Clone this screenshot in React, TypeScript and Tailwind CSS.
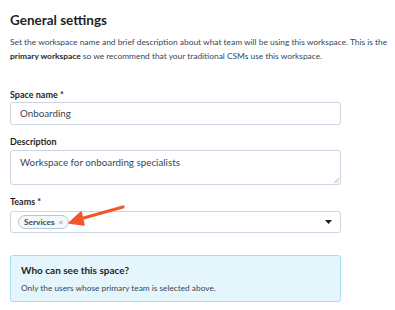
import React from "react";

export default function App() {
  return (
    <div className="relative w-[395px] h-[310px] bg-white text-[#213343] font-['Lato','Open_Sans',sans-serif]">
      <div className="pl-[10px] pt-[11px] w-[341px]">
        <h1 className="text-[13.5px] font-bold leading-[18px] text-[#1f1f1f]">General settings</h1>
        <p className="mt-[6px] w-[384px] text-[8.4px] leading-[14px] text-[#33475b] whitespace-nowrap">
          Set the workspace name and brief description about what team will be using this workspace. This is the
          <br />
          <span className="font-bold text-[#1f1f1f]">primary workspace</span> so we recommend that your traditional CSMs use this workspace.
        </p>

        <div className="mt-[26px] text-[9px] font-bold leading-[12px] text-[#1f1f1f]">Space name *</div>
        <div className="mt-[1px] h-[23px] w-[331px] rounded-[3px] border border-[#cbd6e2] flex items-center pl-[9px] text-[9.8px] text-[#33475b]">
          Onboarding
        </div>

        <div className="mt-[11px] text-[9px] font-bold leading-[12px] text-[#1f1f1f]">Description</div>
        <div className="relative mt-[2px] h-[35px] w-[331px] rounded-[3px] border border-[#cbd6e2] pl-[9px] pt-[4px] text-[9.8px] leading-[14px] text-[#33475b]">
          Workspace for onboarding specialists
          <svg className="absolute right-[1px] bottom-[1px]" width="6" height="6" viewBox="0 0 6 6">
            <path d="M1 6 L6 1 M3.5 6 L6 3.5" stroke="#a0a0a0" strokeWidth="0.8" />
          </svg>
        </div>

        <div className="mt-[11px] text-[9px] font-bold leading-[12px] text-[#1f1f1f]">Teams *</div>
        <div className="mt-[3px] h-[22px] w-[331px] rounded-[3px] border border-[#cbd6e2] flex items-center justify-between pl-[7px] pr-[8px]">
          <div className="h-[14px] rounded-full border border-[#b9c5d2] bg-[#f5f8fa] flex items-center px-[5px] gap-[4px]">
            <span className="text-[8.3px] font-bold text-[#33475b] leading-none">Services</span>
            <span className="text-[8px] text-[#7c98b6] leading-none">×</span>
          </div>
          <svg width="7" height="4" viewBox="0 0 7 4">
            <path d="M0 0 H7 L3.5 4 Z" fill="#1f1f1f" />
          </svg>
        </div>

        <div className="mt-[22px] h-[47px] w-[331px] rounded-[3px] border border-[#a9dcf2] bg-[#e5f5fc] pl-[10px] pt-[8px]">
          <div className="text-[10px] font-bold leading-[13px] text-[#1f1f1f]">Who can see this space?</div>
          <div className="mt-[5px] text-[8.3px] leading-[12px] text-[#33475b]">Only the users whose primary team is selected above.</div>
        </div>
      </div>

      <svg className="absolute left-0 top-0 pointer-events-none" width="395" height="310">
        <path d="M123 207 L80 219" stroke="#f2572a" strokeWidth="3.2" strokeLinecap="round" />
        <path d="M69 223 L81 212 L84 225 Z" fill="#f2572a" stroke="#f2572a" strokeWidth="1.5" strokeLinejoin="round" />
      </svg>
    </div>
  );
}
